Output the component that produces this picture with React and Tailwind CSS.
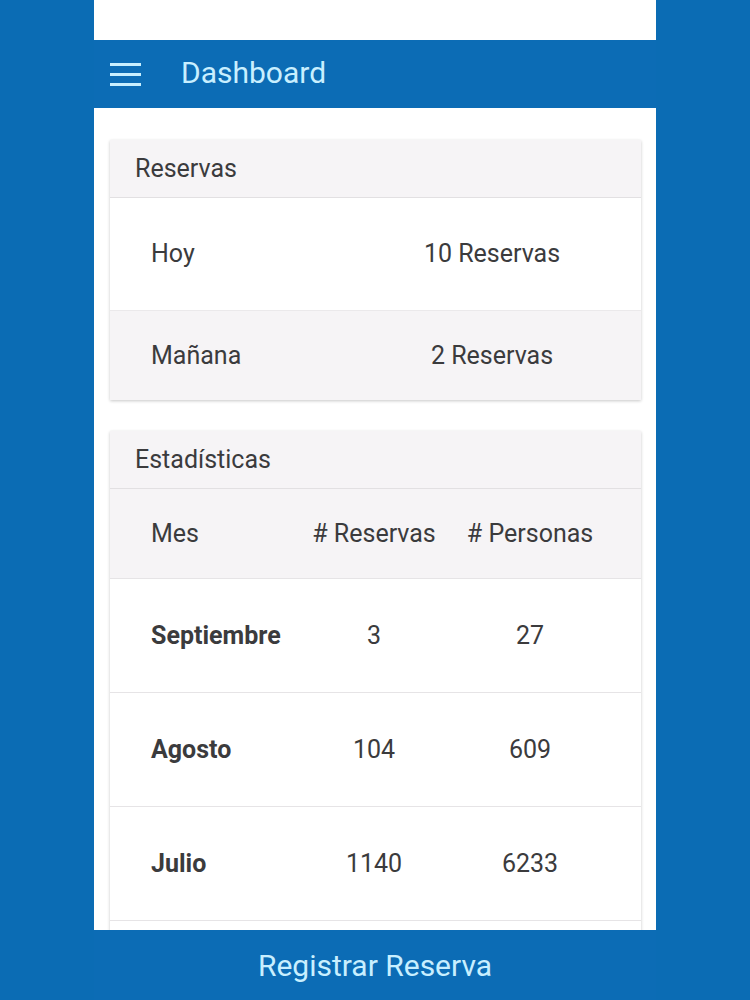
const months = [
  { name: 'Septiembre', reservas: 3, personas: 27 },
  { name: 'Agosto', reservas: 104, personas: 609 },
  { name: 'Julio', reservas: 1140, personas: 6233 },
];

const App = () => {
  return (
    <div
      className="min-h-screen bg-[#0b6cb4]"
      style={{ fontFamily: 'Roboto, "Noto Sans", sans-serif' }}
    >
      <div className="mx-auto w-[562px] h-screen flex flex-col overflow-hidden">
        <div className="h-[40px] bg-white shrink-0" />

        <header className="h-[68px] shrink-0 bg-[#0c6cb5] flex items-center">
          <div className="ml-[16px] w-[31px] flex flex-col gap-[7px]">
            <span className="block h-[3px] bg-[#c8efff]" />
            <span className="block h-[3px] bg-[#c8efff]" />
            <span className="block h-[3px] bg-[#c8efff]" />
          </div>
          <h1 className="ml-[40px] text-[30px] text-[#c8efff] leading-none -mt-[2px]">Dashboard</h1>
        </header>

        <main className="flex-1 overflow-hidden bg-white pl-[16px] pr-[15px] pt-[32px] text-[#3b3b3d]">
          <section className="bg-white shadow-[0_1px_3px_rgba(0,0,0,0.22)]">
            <div className="h-[58px] bg-[#f6f4f6] border-b border-[#e2e0e2] flex items-center pl-[25px] text-[25px]">
              Reservas
            </div>
            <div className="h-[113px] grid grid-cols-[233px_1fr] items-center text-[25px] border-b border-[#ebe9eb]">
              <span className="pl-[41px]">Hoy</span>
              <span className="text-center">10 Reservas</span>
            </div>
            <div className="h-[89px] grid grid-cols-[233px_1fr] items-center text-[25px] bg-[#f6f4f6]">
              <span className="pl-[41px]">Mañana</span>
              <span className="text-center">2 Reservas</span>
            </div>
          </section>

          <section className="mt-[31px] bg-white shadow-[0_1px_3px_rgba(0,0,0,0.22)]">
            <div className="h-[58px] bg-[#f6f4f6] border-b border-[#e2e0e2] flex items-center pl-[25px] text-[25px]">
              Estadísticas
            </div>
            <div className="h-[89px] grid grid-cols-[188px_152px_160px] items-center text-[25px] bg-[#f6f4f6]">
              <span className="pl-[41px]">Mes</span>
              <span className="text-center"># Reservas</span>
              <span className="text-center"># Personas</span>
            </div>
            {months.map((m) => (
              <div
                key={m.name}
                className="h-[114px] grid grid-cols-[188px_152px_160px] items-center text-[25px] border-t border-[#e6e4e6]"
              >
                <span className="pl-[41px] font-bold">{m.name}</span>
                <span className="text-center">{m.reservas}</span>
                <span className="text-center">{m.personas}</span>
              </div>
            ))}
            <div className="h-[114px] border-t border-[#e6e4e6]" />
          </section>
        </main>

        <footer className="h-[70px] shrink-0 bg-[#0c6cb5] flex items-center justify-center">
          <span className="text-[30px] text-[#c8efff]">Registrar Reserva</span>
        </footer>
      </div>
    </div>
  );
};

export default App;
